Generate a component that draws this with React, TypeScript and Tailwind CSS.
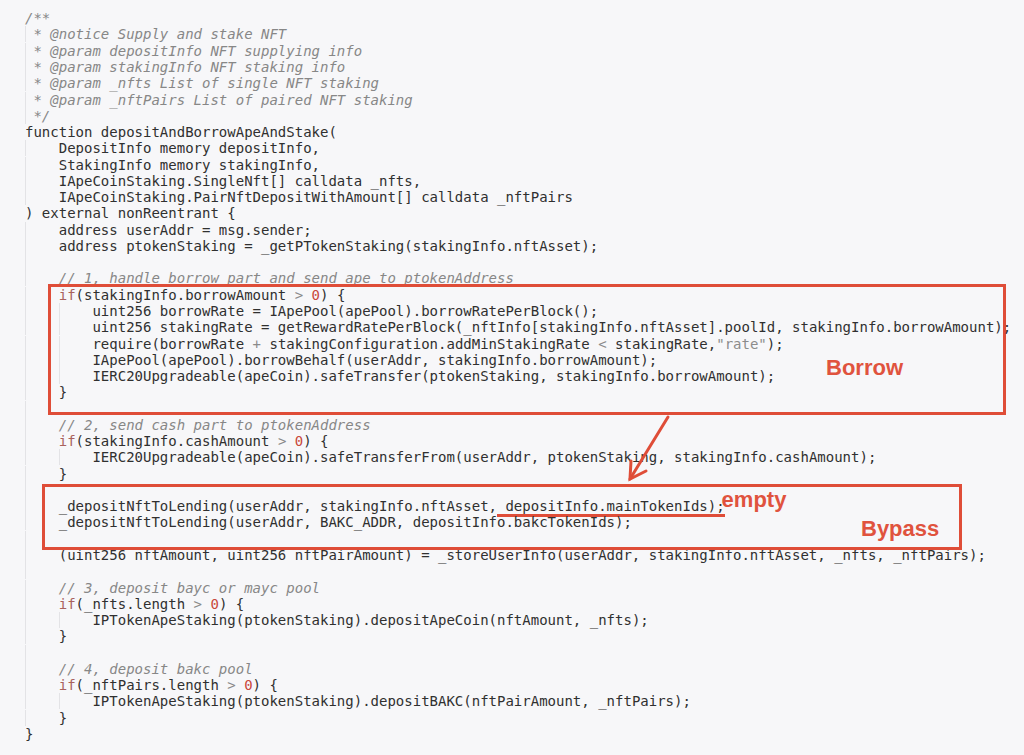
import React from "react"

const code = [
    "/**",
    " * @notice Supply and stake NFT",
    " * @param depositInfo NFT supplying info",
    " * @param stakingInfo NFT staking info",
    " * @param _nfts List of single NFT staking",
    " * @param _nftPairs List of paired NFT staking",
    " */",
    "function depositAndBorrowApeAndStake(",
    "    DepositInfo memory depositInfo,",
    "    StakingInfo memory stakingInfo,",
    "    IApeCoinStaking.SingleNft[] calldata _nfts,",
    "    IApeCoinStaking.PairNftDepositWithAmount[] calldata _nftPairs",
    ") external nonReentrant {",
    "    address userAddr = msg.sender;",
    "    address ptokenStaking = _getPTokenStaking(stakingInfo.nftAsset);",
    "    ",
    "    // 1, handle borrow part and send ape to ptokenAddress",
]

const borrowBlock = [
    "    if(stakingInfo.borrowAmount > 0) {",
    "        uint256 borrowRate = IApePool(apePool).borrowRatePerBlock();",
    "        uint256 stakingRate = getRewardRatePerBlock(_nftInfo[stakingInfo.nftAsset].poolId, stakingInfo.borrowAmount);",
    "        require(borrowRate + stakingConfiguration.addMinStakingRate < stakingRate,\"rate\");",
    "        IApePool(apePool).borrowBehalf(userAddr, stakingInfo.borrowAmount);",
    "        IERC20Upgradeable(apeCoin).safeTransfer(ptokenStaking, stakingInfo.borrowAmount);",
    "    }",
    "    ",
]

const cashBlock = [
    "    // 2, send cash part to ptokenAddress",
    "    if(stakingInfo.cashAmount > 0) {",
    "        IERC20Upgradeable(apeCoin).safeTransferFrom(userAddr, ptokenStaking, stakingInfo.cashAmount);",
    "    }",
]

const bypassBlock = [
    "    ",
    "    _depositNftToLending(userAddr, stakingInfo.nftAsset, depositInfo.mainTokenIds);",
    "    _depositNftToLending(userAddr, BAKC_ADDR, depositInfo.bakcTokenIds);",
    "    ",
]

const tail = [
    "    (uint256 nftAmount, uint256 nftPairAmount) = _storeUserInfo(userAddr, stakingInfo.nftAsset, _nfts, _nftPairs);",
    "    ",
    "    // 3, deposit bayc or mayc pool",
    "    if(_nfts.length > 0) {",
    "        IPTokenApeStaking(ptokenStaking).depositApeCoin(nftAmount, _nfts);",
    "    }",
    "    ",
    "    // 4, deposit bakc pool",
    "    if(_nftPairs.length > 0) {",
    "        IPTokenApeStaking(ptokenStaking).depositBAKC(nftPairAmount, _nftPairs);",
    "    }",
    "}",
]

const EMPTY_MARK = " depositInfo.mainTokenIds);"

// split a code line into coloured tokens
function Tokens({ text }: { text: string }) {
    const parts = text.split(/("[^"]*"|\bif\b|\b\d+\b|[+<>])/g)
    return (
        <>
            {parts.map((p, i) => {
                if (!p) return null
                if (p === "if") return <span key={i} className="text-[#a9625c]">{p}</span>
                if (/^\d+$/.test(p)) return <span key={i} className="text-[#c9483b]">{p}</span>
                if (p.startsWith('"')) return <span key={i} className="text-[#8c8c8c]">{p}</span>
                if (p === "+" || p === "<" || p === ">") return <span key={i} className="text-[#8a8a8a]">{p}</span>
                return <span key={i}>{p}</span>
            })}
        </>
    )
}

function CodeLine({ line }: { line: string }) {
    const indent = line.length - line.trimStart().length
    let body = line.slice(indent)
    const guides: number[] = []
    for (let c = 0; c < indent; c += 4) guides.push(Math.min(4, indent - c))
    const isComment = /^(\/\*|\*|\/\/)/.test(body)
    const marked = body.endsWith(EMPTY_MARK)
    if (marked) body = body.slice(0, -EMPTY_MARK.length)

    return (
        <div className="h-[16.27px] whitespace-pre">
            {guides.map((w, i) => (
                <span key={i} className="shadow-[inset_1px_0_0_#e3e3e6]">{" ".repeat(w)}</span>
            ))}
            {isComment ? (
                <span className="italic text-[#878787]">{body}</span>
            ) : (
                <Tokens text={body} />
            )}
            {marked && (
                <>
                    <span className="border-b-[3px] border-[#df4d38]">{EMPTY_MARK}</span>
                    <span className="-ml-[3px] align-[4px] font-['Liberation_Sans',Arial,sans-serif] font-bold text-[22px] leading-[0px] text-[#e0533e]">empty</span>
                </>
            )}
        </div>
    )
}

function Lines({ lines }: { lines: string[] }) {
    return (
        <>
            {lines.map((line, i) => (
                <CodeLine key={i} line={line} />
            ))}
        </>
    )
}

const label = "font-['Liberation_Sans',Arial,sans-serif] font-bold text-[22px] leading-none text-[#e0533e]"

export default function App() {
    return (
        <div className="relative w-[1024px] h-[755px] overflow-hidden bg-[#f7f7f9]">
            <div className="pl-[25px] pt-[10.2px] font-['DejaVu_Sans_Mono',monospace] text-[14px] leading-[16.27px] text-[#303030]">
                <Lines lines={code} />

                <div className="relative grid h-[131px] w-[958px] -mt-[3px] mb-[2.15px] ml-[23px] border-[3px] border-[#df4d38]">
                    <div className="col-start-1 row-start-1 -ml-[26px]">
                        <Lines lines={borrowBlock} />
                    </div>
                    <span className={`col-start-1 row-start-1 self-start justify-self-start ml-[775px] mt-[70px] ${label}`}>Borrow</span>
                </div>

                <Lines lines={cashBlock} />

                <div className="relative grid h-[66px] w-[920px] mt-[2px] -mb-[2.9px] ml-[17px] border-[3px] border-[#df4d38]">
                    <div className="col-start-1 row-start-1 -ml-[20px] -mt-[5px]">
                        <Lines lines={bypassBlock} />
                    </div>
                    <span className={`col-start-1 row-start-1 self-start justify-self-start ml-[816px] mt-[31px] ${label}`}>Bypass</span>
                </div>

                <Lines lines={tail} />
            </div>

            {/* arrow from the borrow box down to the bypass box */}
            <svg className="absolute left-0 top-0 pointer-events-none" width="1024" height="755" viewBox="0 0 1024 755">
                <g stroke="#df4d38" strokeWidth="3" strokeLinecap="round" fill="none">
                    <line x1="668" y1="417" x2="630" y2="479" />
                    <polyline points="631,461 630,479 646,471" />
                </g>
            </svg>
        </div>
    )
}
